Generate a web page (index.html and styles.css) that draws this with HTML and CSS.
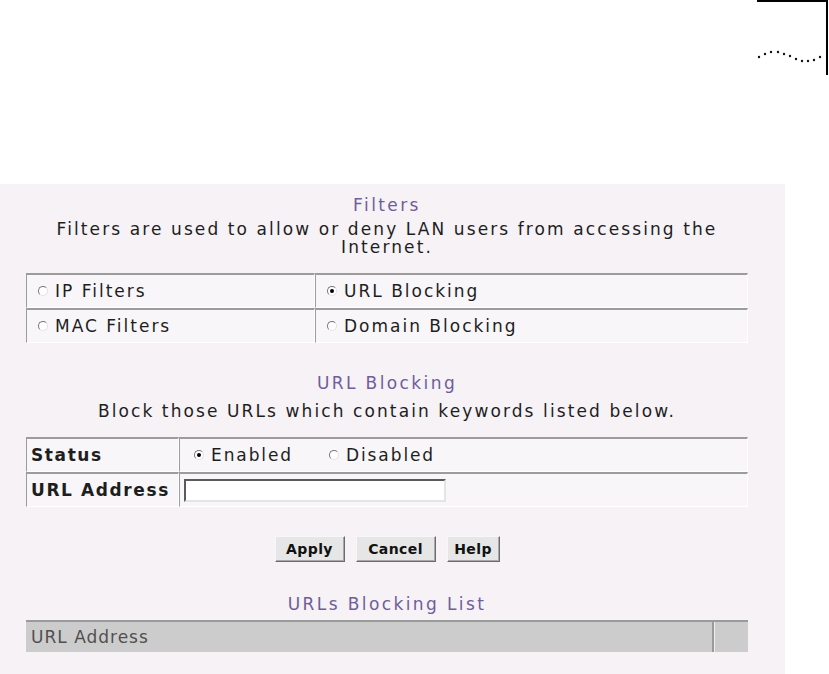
FILE: index.html
```html
<!DOCTYPE html>
<html lang="en">
<head>
<meta charset="utf-8">
<title>Filters - URL Blocking</title>
<link rel="stylesheet" href="styles.css">
</head>
<body>
<header class="top">
  <svg class="corner" width="73" height="75" viewBox="0 0 73 75" aria-hidden="true">
    <path d="M1 1H71V75" fill="none" stroke="#000" stroke-width="2"/>
    <g fill="#111">
      <circle cx="3" cy="57" r="1.2"/>
      <circle cx="9" cy="54" r="1.2"/>
      <circle cx="15" cy="52" r="1.2"/>
      <circle cx="22" cy="52" r="1.2"/>
      <circle cx="28" cy="54" r="1.2"/>
      <circle cx="34" cy="56" r="1.2"/>
      <circle cx="40" cy="59" r="1.2"/>
      <circle cx="46" cy="61" r="1.2"/>
      <circle cx="52" cy="61" r="1.2"/>
      <circle cx="58" cy="60" r="1.2"/>
      <circle cx="64" cy="57" r="1.2"/>
    </g>
  </svg>
</header>
<main class="panel">
  <div class="content">
    <h1 class="title">Filters</h1>
    <p class="desc">Filters are used to allow or deny LAN users from accessing the Internet.</p>
    <table class="grid grid-filters">
      <tr>
        <td class="c-left"><span class="radio"></span>IP Filters</td>
        <td><span class="radio on"></span>URL Blocking</td>
      </tr>
      <tr>
        <td class="c-left"><span class="radio"></span>MAC Filters</td>
        <td><span class="radio"></span>Domain Blocking</td>
      </tr>
    </table>

    <h2 class="title title-gap">URL Blocking</h2>
    <p class="desc desc-gap">Block those URLs which contain keywords listed below.</p>
    <table class="grid grid-url">
      <tr>
        <th class="c-label">Status</th>
        <td class="c-value c-status"><span class="opt"><span class="radio on"></span>Enabled</span><span class="opt"><span class="radio"></span>Disabled</span></td>
      </tr>
      <tr>
        <th class="c-label">URL Address</th>
        <td class="c-value c-input"><input class="field" type="text"></td>
      </tr>
    </table>

    <div class="buttons">
      <button class="btn btn-apply">Apply</button>
      <button class="btn btn-cancel">Cancel</button>
      <button class="btn btn-help">Help</button>
    </div>

    <h2 class="title list-title">URLs Blocking List</h2>
    <table class="list">
      <tr>
        <th class="list-main">URL Address</th>
        <th class="list-end"></th>
      </tr>
    </table>
  </div>
</main>
</body>
</html>
```

FILE: styles.css
```css
* {
  box-sizing: border-box;
}

body {
  margin: 0;
  background: #ffffff;
  font-family: "DejaVu Sans", Verdana, sans-serif;
  color: #1e1e1e;
}

.top {
  height: 184px;
  display: flex;
  justify-content: flex-end;
  align-items: flex-start;
}

.corner {
  display: block;
}

.panel {
  width: 785px;
  height: 490px;
  background: #f6f2f6;
  padding-top: 12px;
}

.content {
  margin-left: 26px;
  width: 722px;
  text-align: center;
}

.title {
  margin: 0;
  font-size: 17px;
  font-weight: normal;
  line-height: 18px;
  letter-spacing: 2.4px;
  color: #6e5e9c;
}

.desc {
  margin: 6px 0 0;
  font-size: 17px;
  line-height: 18px;
  letter-spacing: 2.1px;
}

.title-gap {
  margin-top: 31px;
}

.desc-gap {
  margin-top: 10px;
}

.grid {
  width: 722px;
  margin-top: 17px;
  border-collapse: separate;
  border-spacing: 0;
  text-align: left;
  font-size: 17px;
  letter-spacing: 2px;
}

.grid tr {
  height: 35px;
}

.grid td,
.grid th {
  padding: 0 0 0 11px;
  border-top: 2px solid #9c9c9c;
  border-left: 1px solid #9c9c9c;
  border-right: 1px solid #ffffff;
  border-bottom: 1px solid #ffffff;
  background: #f8f6f8;
  white-space: nowrap;
  vertical-align: middle;
}

.grid-filters .c-left {
  width: 289px;
}

.grid-url .c-label {
  width: 153px;
  padding-left: 4px;
  font-weight: bold;
  letter-spacing: 1.6px;
  text-align: left;
}

.grid-url .c-status {
  padding-left: 14px;
  letter-spacing: 1.9px;
}

.grid-url .c-input {
  padding-left: 4px;
}

.radio {
  display: inline-block;
  position: relative;
  width: 10px;
  height: 10px;
  margin-right: 7px;
  border-radius: 50%;
  border: 1px solid;
  border-color: #767676 #e2e2e2 #e2e2e2 #767676;
  background: #ffffff;
  vertical-align: 1px;
}

.radio.on::after {
  content: "";
  position: absolute;
  left: 2px;
  top: 2px;
  width: 4px;
  height: 4px;
  border-radius: 50%;
  background: #000000;
}

.opt {
  display: inline-block;
}

.opt + .opt {
  margin-left: 36px;
}

.field {
  display: block;
  width: 262px;
  height: 23px;
  margin: 0;
  padding: 0 3px;
  border: 2px solid;
  border-color: #5a5a5a #e4e4e4 #e4e4e4 #5a5a5a;
  background: #ffffff;
  font: 14px "DejaVu Sans", sans-serif;
}

.buttons {
  margin-top: 29px;
  display: flex;
  justify-content: center;
  gap: 11px;
}

.btn {
  height: 26px;
  margin: 0;
  padding: 0;
  font-family: "DejaVu Sans", Verdana, sans-serif;
  font-size: 14px;
  font-weight: bold;
  letter-spacing: 0.4px;
  color: #111111;
  background: #e6e6e6;
  border: 1px solid;
  border-color: #f7f7f7 #6c6c6c #6c6c6c #f7f7f7;
  box-shadow: inset -1px -1px 0 #a8a8a8;
}

.btn-apply {
  width: 70px;
}

.btn-cancel {
  width: 80px;
}

.btn-help {
  width: 53px;
}

.list-title {
  margin-top: 33px;
}

.list {
  width: 722px;
  margin-top: 7px;
  border-collapse: separate;
  border-spacing: 0;
}

.list th {
  height: 32px;
  padding: 0 0 0 5px;
  background: #cccccc;
  border-top: 2px solid #9a9a9a;
  text-align: left;
  font-size: 17px;
  font-weight: normal;
  letter-spacing: 1px;
  color: #505050;
}

.list .list-end {
  width: 36px;
  padding: 0;
  border-left: 2px solid #9a9a9a;
  box-shadow: inset 1px 0 0 #eeeeee;
}
```
